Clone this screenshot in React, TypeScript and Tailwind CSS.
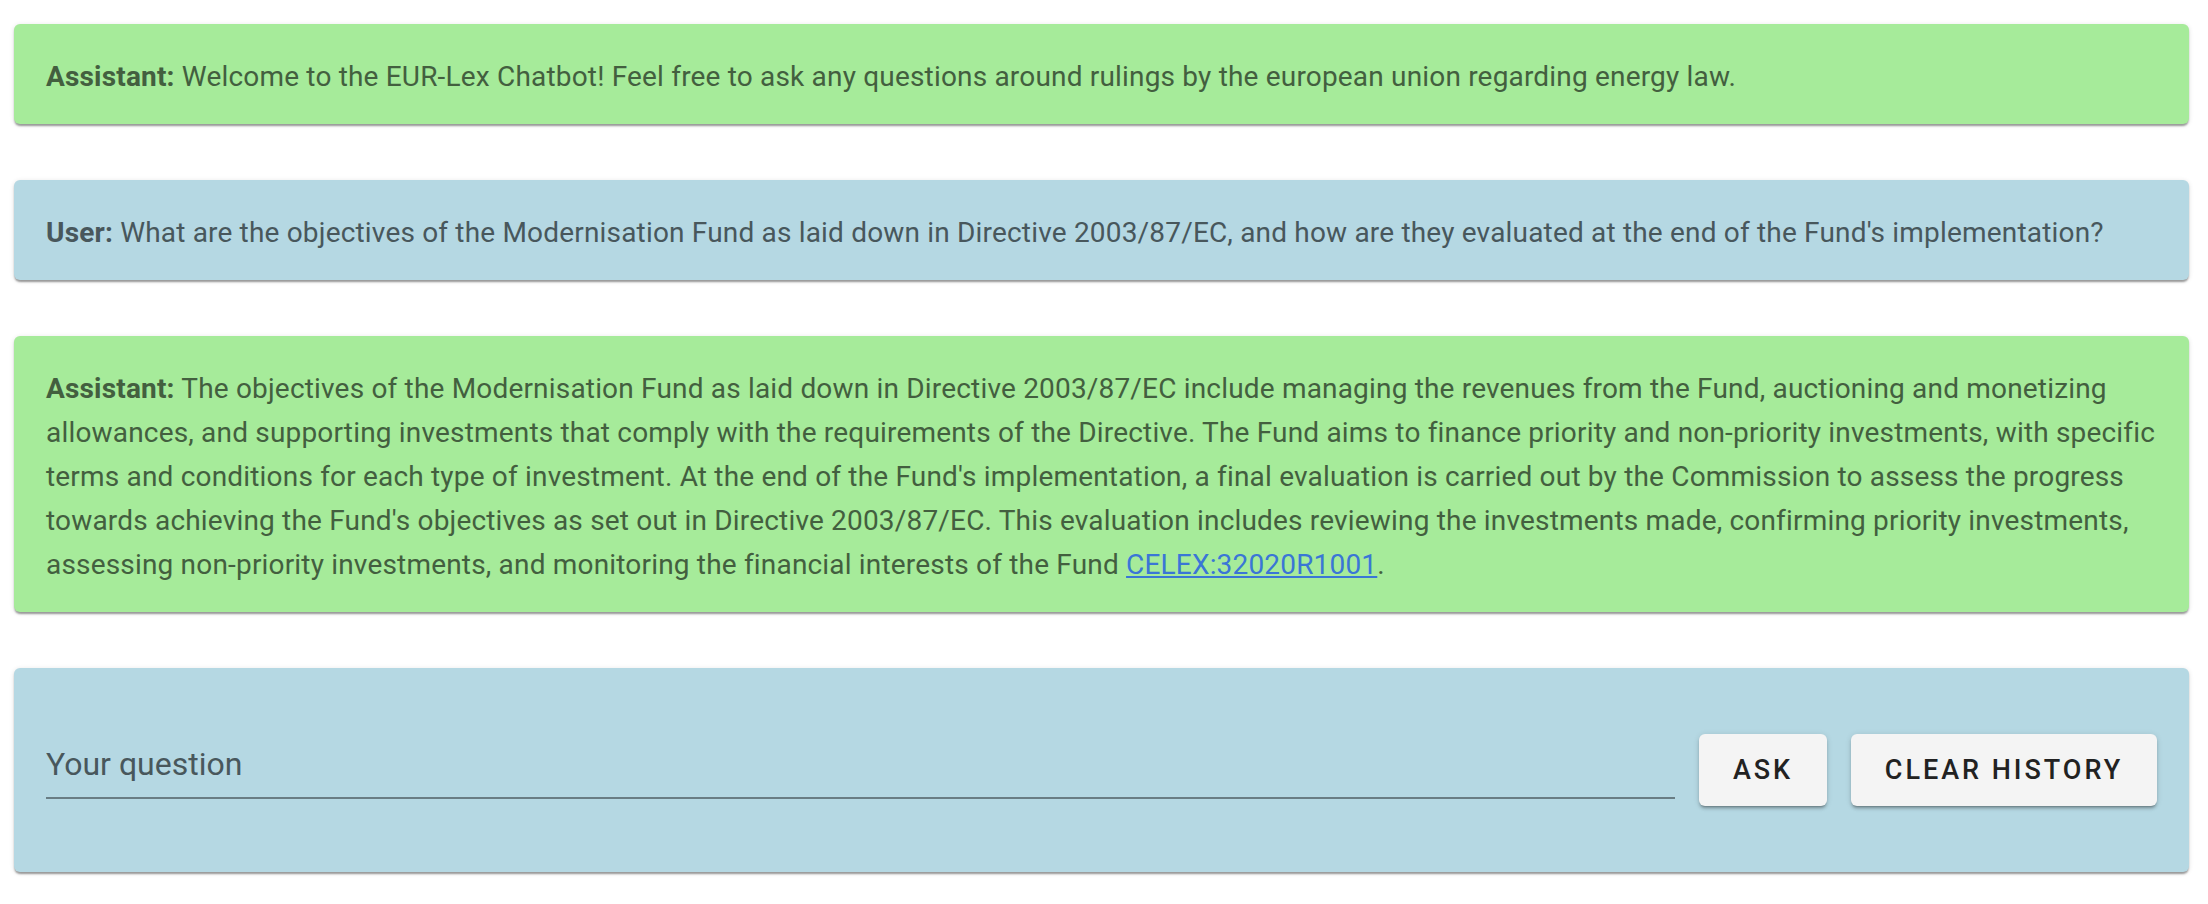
import React from "react";

const shadow =
  "shadow-[0px_3px_2px_-1px_rgba(0,0,0,0.25),0px_2px_2px_0px_rgba(0,0,0,0.14),0px_1px_5px_0px_rgba(0,0,0,0.12)]";

const msg = `rounded-[6px] px-[32px] pt-[31px] pb-[25px] text-[28px] tracking-[0.18px] leading-[44px] ${shadow}`;

const btn =
  "h-[72px] rounded-[6px] bg-[#f4f4f4] text-[27px] font-medium tracking-[0.11em] text-[#222] uppercase shadow-[0px_3px_2px_-2px_rgba(0,0,0,0.25),0px_3px_3px_0px_rgba(0,0,0,0.16),0px_1px_6px_0px_rgba(0,0,0,0.12)]";

export default function App() {
  return (
    <div
      className="min-h-screen bg-white pl-[14px] pr-[19px] pt-[24px] flex flex-col gap-[56px]"
      style={{ fontFamily: "Roboto, 'Liberation Sans', sans-serif" }}
    >
      <div className={`${msg} bg-[#a6eb9a] text-[#435f3f]`}>
        <b className="font-bold">Assistant:</b> Welcome to the EUR-Lex Chatbot! Feel free to ask any questions around rulings by the european union regarding energy law.
      </div>
      <div className={`${msg} bg-[#b5d8e3] text-[#48575c]`}>
        <b className="font-bold">User:</b> What are the objectives of the Modernisation Fund as laid down in Directive 2003/87/EC, and how are they evaluated at the end of the Fund's implementation?
      </div>
      <div className={`${msg} bg-[#a6eb9a] text-[#435f3f]`}>
        <b className="font-bold">Assistant:</b> The objectives of the Modernisation Fund as laid down in Directive 2003/87/EC include managing the revenues from the Fund, auctioning and monetizing allowances, and supporting investments that comply with the requirements of the Directive. The Fund aims to finance priority and non-priority investments, with specific terms and conditions for each type of investment. At the end of the Fund's implementation, a final evaluation is carried out by the Commission to assess the progress towards achieving the Fund's objectives as set out in Directive 2003/87/EC. This evaluation includes reviewing the investments made, confirming priority investments, assessing non-priority investments, and monitoring the financial interests of the Fund{" "}
        <a href="#" className="text-[#3a76d6] underline">CELEX:32020R1001</a>.
      </div>
      <div className={`rounded-[6px] px-[32px] py-[66px] bg-[#b5d8e3] flex items-center gap-[24px] ${shadow}`}>
        <div className="flex-1 self-end mb-[7px] pb-[13px] border-b-2 border-[#697d84]">
          <input
            placeholder="Your question"
            className="block w-full bg-transparent outline-none text-[32px] leading-[40px] text-[#48575c] placeholder:text-[#48575c]"
          />
        </div>
        <button className={`${btn} w-[128px]`}>Ask</button>
        <button className={`${btn} w-[306px]`}>Clear history</button>
      </div>
    </div>
  );
}
